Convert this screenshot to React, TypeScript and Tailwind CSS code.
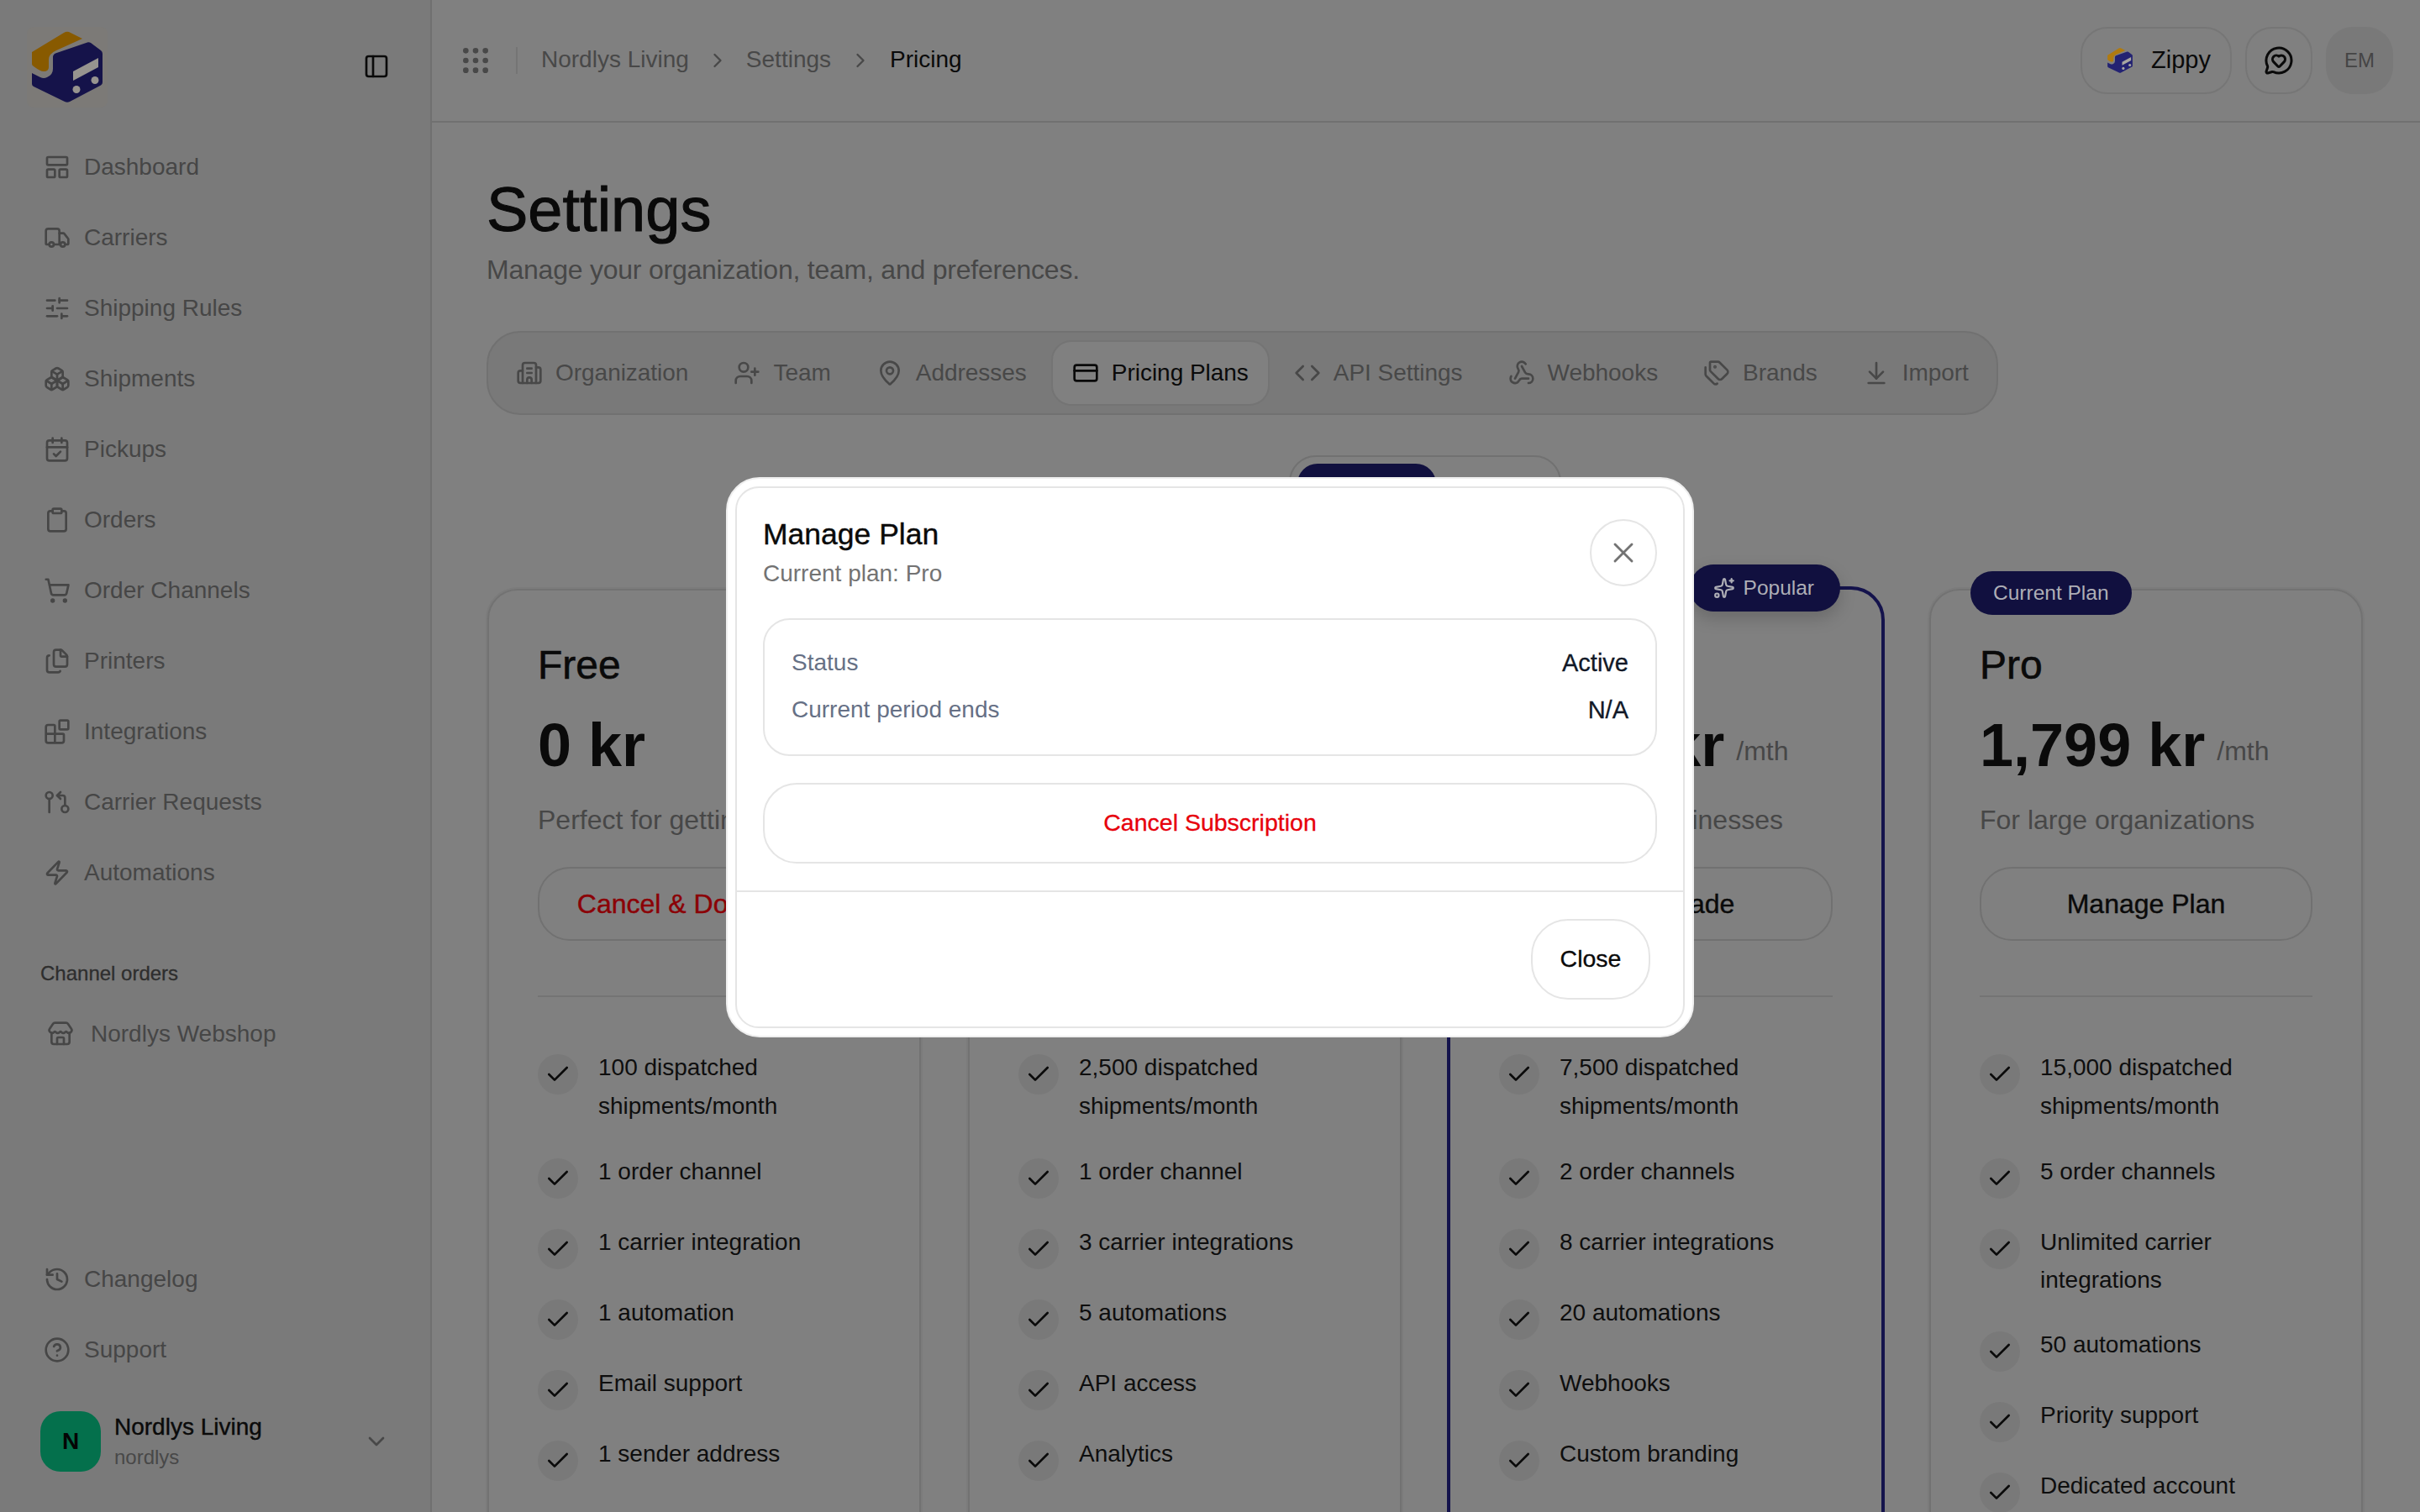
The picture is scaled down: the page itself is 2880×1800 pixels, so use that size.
import React from "react";
import {
  ArrowDownToLine, Blocks, Boxes, Building2, CalendarCheck, Check, ChevronDown, ChevronRight, CircleHelp, Clipboard, Code,
  CreditCard, Files, GitPullRequestArrow, Grip, History, LayoutPanelTop, MapPin, MessageCircleHeart, PanelLeft, ShoppingCart,
  SlidersHorizontal, Sparkles, Store, Tags, Truck, UserPlus, Webhook, X, Zap,
} from "lucide-react";

function Logo({ size, navy, gold, cut }: { size: number; navy: string; gold: string; cut: string }) {
  return (
    <svg width={size} height={size} viewBox="32 32 96 96">
      <path d="M38 62 L76 39 Q80 36.5 84 39 L98 46 L67 60 Q58 64 58 71 L58 80 Q58 85 52 85 Q48 85 40 79 Q38 78 38 76 Z" fill={gold} />
      <path d="M63 68 Q63 65 66 63.5 L104 50.5 Q106 50 108 51 L120 60 Q122 61.5 122 64 L122 98 Q122 100.5 120 101.5 L83 121 Q80 122.5 77 121 L40 103 Q38 102 38 100 L38 87 L48 92 Q52 94 56 92 Q63 89 63 82 Z" fill={navy} />
      <path d="M87 85 L117 69 L117 80 L87 96 Z" fill={cut} />
      <ellipse cx="91" cy="106.5" rx="4.5" ry="4.5" fill={cut} />
      <ellipse cx="113" cy="95.5" rx="4.5" ry="4.5" fill={cut} />
    </svg>
  );
}

const navItems = [
  { label: "Dashboard", icon: LayoutPanelTop },
  { label: "Carriers", icon: Truck },
  { label: "Shipping Rules", icon: SlidersHorizontal },
  { label: "Shipments", icon: Boxes },
  { label: "Pickups", icon: CalendarCheck },
  { label: "Orders", icon: Clipboard },
  { label: "Order Channels", icon: ShoppingCart },
  { label: "Printers", icon: Files },
  { label: "Integrations", icon: Blocks },
  { label: "Carrier Requests", icon: GitPullRequestArrow },
  { label: "Automations", icon: Zap },
];

const tabs = [
  { label: "Organization", icon: Building2 },
  { label: "Team", icon: UserPlus },
  { label: "Addresses", icon: MapPin },
  { label: "Pricing Plans", icon: CreditCard, active: true },
  { label: "API Settings", icon: Code },
  { label: "Webhooks", icon: Webhook },
  { label: "Brands", icon: Tags },
  { label: "Import", icon: ArrowDownToLine },
];

const plans = [
  {
    name: "Free", price: "0 kr", desc: "Perfect for getting started", cta: "Cancel & Downgrade", danger: true, per: false,
    features: ["100 dispatched shipments/month", "1 order channel", "1 carrier integration", "1 automation", "Email support", "1 sender address"],
  },
  {
    name: "Starter", price: "399 kr", desc: "For small businesses", cta: "Downgrade", per: true,
    features: ["2,500 dispatched shipments/month", "1 order channel", "3 carrier integrations", "5 automations", "API access", "Analytics"],
  },
  {
    name: "Growth", price: "1,199 kr", desc: "For growing businesses", cta: "Downgrade", per: true, popular: true,
    features: ["7,500 dispatched shipments/month", "2 order channels", "8 carrier integrations", "20 automations", "Webhooks", "Custom branding"],
  },
  {
    name: "Pro", price: "1,799 kr", desc: "For large organizations", cta: "Manage Plan", per: true, current: true,
    features: ["15,000 dispatched shipments/month", "5 order channels", "Unlimited carrier integrations", "50 automations", "Priority support", "Dedicated account"],
  },
];

function NavRow({ label, Icon }: { label: string; Icon: React.ElementType }) {
  return (
    <a className="flex h-[80px] items-center gap-4 px-5 text-[28px] text-[#464646]">
      <Icon size={32} />
      <span>{label}</span>
    </a>
  );
}

function Plan({ plan }: { plan: (typeof plans)[number] }) {
  const popular = "popular" in plan && plan.popular;
  return (
    <div className={`relative pb-[160px] ${popular ? "ml-[-2px] mr-[-3px] mt-[-3px] rounded-[40px] border-[4px] border-[#14134c] px-[58px] pt-[62px]" : "rounded-[36px] border-2 border-[#727272] px-[58px] pt-[61px] shadow-[0_0_0_2px_#7b7b7b]"}`}>
      {popular && (
        <div className="absolute right-[49px] top-[-30px] flex h-[56px] items-center gap-[10px] rounded-[28px] bg-[#11103f] pl-7 pr-[31px] text-[24.5px] text-[#aeaeb6] shadow-[0_8px_20px_rgba(0,0,0,0.18)]">
          <Sparkles size={26} />
          Popular
        </div>
      )}
      {"current" in plan && plan.current && (
        <div className="absolute left-[47px] top-[-23px] flex h-[52px] items-center rounded-[26px] bg-[#11103f] px-[27px] text-[24.5px] text-[#aeaeb6]">
          Current Plan
        </div>
      )}
      <div className="text-[48px] leading-[56px] text-[#0a0a0a] [-webkit-text-stroke:0.6px_#0a0a0a]">{plan.name}</div>
      <div className="mt-[27px] flex items-baseline gap-[14px]">
        <span className="text-[72px] font-bold leading-[80px] text-[#0a0a0a]">{plan.price}</span>
        {plan.per && <span className="-translate-y-[7px] text-[32px] text-[#474747]">/mth</span>}
      </div>
      <div className="mt-[25px] text-[32px] leading-[48px] text-[#474747]">{plan.desc}</div>
      <div className={`mt-[32px] flex h-[88px] items-center justify-center rounded-[38px] border-2 border-[#717171] text-[32px] [-webkit-text-stroke:0.4px_currentColor] ${plan.danger ? "text-[#8b0006]" : "text-[#0a0a0a]"}`}>
        {plan.cta}
      </div>
      <div className="mt-[65px] h-[2px] bg-[#747474]" />
      <ul className="mt-[64px] flex flex-col gap-8">
        {plan.features.map((f) => (
          <li key={f} className="flex gap-6">
            <span className="mt-1 flex h-[48px] w-[48px] shrink-0 items-center justify-center rounded-full bg-[#797979] text-[#0a0a0a]">
              <Check size={32} />
            </span>
            <span className={`-translate-y-[3px] text-[28px] text-[#0e0e0e] ${f.startsWith("Unlimited") ? "leading-[45px]" : "leading-[46px]"}`}>{f}</span>
          </li>
        ))}
      </ul>
    </div>
  );
}

export default function App() {
  return (
    <div className="relative flex h-[1800px] w-[2880px] overflow-hidden bg-[#808080] font-['Liberation_Sans',Arial,sans-serif]">
      <aside className="flex w-[514px] shrink-0 flex-col border-r-2 border-[#707070] bg-[#7a7a7a] pb-[48px]">
        <div className="flex h-[159px] items-start justify-between pl-[32px] pr-[48px] pt-[32px]">
          <span className="rounded-lg bg-[#7c7a77]"><Logo size={96} navy="#15134a" gold="#885a00" cut="#97948f" /></span>
          <span className="mt-[31px] text-[#0a0a0a]"><PanelLeft size={32} /></span>
        </div>
        <nav className="flex flex-col gap-1 px-8">
          {navItems.map((n) => <NavRow key={n.label} label={n.label} Icon={n.icon} />)}
        </nav>
        <div className="mt-[64px] px-[48px] text-[24px] leading-[32px] text-[#2e2e2e] [-webkit-text-stroke:0.3px_#2e2e2e]">Channel orders</div>
        <div className="mt-[16px] px-8">
          <a className="flex h-[80px] items-center gap-5 px-6 text-[28px] text-[#464646]"><Store size={32} /><span>Nordlys Webshop</span></a>
        </div>
        <div className="mt-auto flex flex-col gap-1 px-8">
          <NavRow label="Changelog" Icon={History} />
          <NavRow label="Support" Icon={CircleHelp} />
        </div>
        <div className="mt-[33px] flex items-center pl-[48px] pr-[48px]">
          <div className="flex h-[72px] w-[72px] items-center justify-center rounded-[24px] bg-[#04704c] text-[28px] font-bold text-[#050505]">N</div>
          <div className="ml-4 flex-1 translate-y-[1px]">
            <div className="text-[28px] leading-[36px] text-[#0a0a0a] [-webkit-text-stroke:0.4px_#0a0a0a]">Nordlys Living</div>
            <div className="text-[24px] leading-[36px] text-[#484848]">nordlys</div>
          </div>
          <ChevronDown size={32} className="text-[#484848]" />
        </div>
      </aside>

      <main className="flex min-w-0 flex-1 flex-col">
        <header className="flex h-[146px] shrink-0 items-center border-b-2 border-[#717171] pl-[32px] pr-[32px]">
          <Grip size={40} className="text-[#484848]" />
          <span className="ml-[28px] h-[32px] w-[2px] bg-[#757575]" />
          <span className="ml-[28px] -translate-y-px text-[28px] text-[#484848]">Nordlys Living</span>
          <ChevronRight size={28} className="mx-[20px] text-[#484848]" />
          <span className="-translate-y-px text-[28px] text-[#484848]">Settings</span>
          <ChevronRight size={28} className="mx-[21px] text-[#484848]" />
          <span className="-translate-y-px text-[28px] text-[#0a0a0a]">Pricing</span>
          <div className="ml-auto flex items-center">
            <div className="flex h-[80px] w-[180px] items-center gap-[20px] rounded-[32px] border-2 border-[#767676] pl-[28px] text-[29px] text-[#0a0a0a]">
              <Logo size={34} navy="#232272" gold="#b07a10" cut="#a8a6a0" />
              <span>Zippy</span>
            </div>
            <div className="ml-[16px] flex h-[80px] w-[80px] items-center justify-center rounded-[32px] border-2 border-[#767676] text-[#0a0a0a]">
              <MessageCircleHeart size={36} />
            </div>
            <div className="ml-[16px] flex h-[80px] w-[80px] items-center justify-center rounded-[32px] bg-[#797979] text-[24px] text-[#454545]">EM</div>
          </div>
        </header>

        <div className="pl-[66px]">
          <h1 className="-ml-px mt-[64px] text-[74px] leading-[80px] text-[#0a0a0a] [-webkit-text-stroke:1px_#0a0a0a]">Settings</h1>
          <p className="-ml-px mt-[7px] text-[32px] leading-[48px] tracking-[-0.23px] text-[#474747]">Manage your organization, team, and preferences.</p>

          <div className="-ml-px mt-[49px] flex h-[100px] w-fit items-center gap-1 rounded-[40px] border-2 border-[#717171] bg-[#797979] px-[8px]">
            {tabs.map((t) => (
              <div key={t.label} className={`flex h-[78px] items-center gap-[15px] rounded-[24px] border-2 px-[23px] text-[28px] tracking-[-0.03px] ${t.active ? "border-[#747474] bg-[#808080] text-[#0a0a0a]" : "border-transparent text-[#484848]"}`}>
                <t.icon size={32} />
                <span>{t.label}</span>
              </div>
            ))}
          </div>

          <div className="mt-[48px] flex justify-center pr-[66px]">
            <div className="ml-[-2px] flex h-[94px] w-[324px] items-start rounded-[32px] border-2 border-[#717171] p-2 text-[28px]">
              <div className="flex h-[74px] w-[165px] items-center justify-center rounded-[24px] bg-[#11103f] text-[#aeaeb6]">Monthly</div>
              <div className="flex h-[74px] flex-1 items-center justify-center text-[#484848]">Yearly</div>
            </div>
          </div>

          <div className="mt-[65px] grid w-[2232px] grid-cols-4 items-start gap-[56px]">
            {plans.map((p) => <Plan key={p.name} plan={p} />)}
          </div>
        </div>
      </main>

      <div className="absolute left-[864px] top-[568px] w-[1152px] rounded-[40px] border-2 border-[#efefef] bg-white p-[9px]">
        <div className="rounded-[28px] border-2 border-[#e5e5e5] bg-white">
          <div className="px-[31px] pt-[31px]">
            <div className="flex items-center justify-between">
              <div>
                <div className="text-[35.5px] leading-[48px] text-[#0a0a0a] [-webkit-text-stroke:0.4px_#0a0a0a]">Manage Plan</div>
                <div className="mt-[3px] text-[28px] leading-[40px] text-[#737373]">Current plan: Pro</div>
              </div>
              <button className="flex h-[80px] w-[80px] items-center justify-center rounded-full border-2 border-[#e5e5e5] text-[#737373]">
                <X size={40} strokeWidth={1.75} />
              </button>
            </div>
            <div className="mt-[33px] flex flex-col gap-4 rounded-[32px] border-2 border-[#e5e5e5] px-[32px] pb-[33px] pt-[31px] text-[28px] leading-[40px]">
              <div className="flex justify-between"><span className="text-[#667085]">Status</span><span className="text-[29px] text-[#111827] [-webkit-text-stroke:0.3px_#111827]">Active</span></div>
              <div className="flex justify-between"><span className="text-[#667085]">Current period ends</span><span className="text-[29px] text-[#111827] [-webkit-text-stroke:0.3px_#111827]">N/A</span></div>
            </div>
            <button className="mt-[32px] flex h-[96px] w-full items-center justify-center rounded-[40px] border-2 border-[#e5e5e5] pb-[2px] text-[28.5px] text-[#e7000b] [-webkit-text-stroke:0.3px_#e7000b]">Cancel Subscription</button>
          </div>
          <div className="mt-[32px] flex justify-end border-t-2 border-[#e5e5e5] py-[32px] pr-[39px]">
            <button className="flex h-[96px] w-[142px] items-center justify-center rounded-[44px] border-2 border-[#e5e5e5] pb-[1px] text-[28.5px] text-[#0a0a0a] [-webkit-text-stroke:0.3px_#0a0a0a]">Close</button>
          </div>
        </div>
      </div>
    </div>
  );
}
